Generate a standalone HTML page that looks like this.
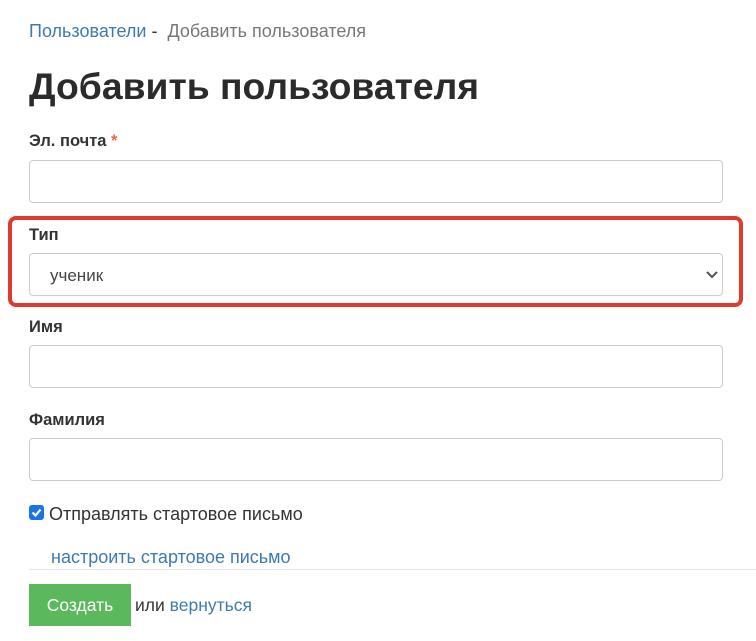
<!DOCTYPE html>
<html><head><meta charset="utf-8"><style>
body{margin:0;background:#fff;font-family:"Liberation Sans","DejaVu Sans",sans-serif;color:#333;width:756px;height:641px;overflow:hidden;position:relative}
.a{position:absolute}
.crumb{left:29px;top:21px;font-size:18px;color:#777}
.crumb span{color:#3c7ab0}
h1{position:absolute;left:29px;top:65px;margin:0;font-size:37.3px;font-weight:bold;color:#2b2b2b}
.lbl{position:absolute;left:29px;font-size:16.5px;font-weight:bold;color:#333}
.inp{position:absolute;left:29px;width:692px;height:41px;border:1px solid #ccc;border-radius:4px;background:#fff}
.red{position:absolute;left:8px;top:216px;width:727px;height:83px;border:4px solid #e03a2e;border-radius:8px}
</style></head><body>
<div class="a crumb"><span>Пользователи</span> <span style="color:#333">-</span>&nbsp; Добавить пользователя</div>
<h1>Добавить пользователя</h1>
<div class="lbl" style="top:132px">Эл. почта <span style="color:#f0604a">*</span></div>
<div class="inp" style="top:160px"></div>
<div class="red"></div>
<div class="lbl" style="top:226px">Тип</div>
<div class="inp" style="top:253px"><span class="a" style="left:20px;top:12px;font-size:17px;color:#444">ученик</span>
<svg class="a" style="left:676px;top:17px" width="12" height="8" viewBox="0 0 12 8"><path d="M1 1l5 5 5-5" fill="none" stroke="#555" stroke-width="2"/></svg></div>
<div class="lbl" style="top:318px">Имя</div>
<div class="inp" style="top:345px"></div>
<div class="lbl" style="top:411px">Фамилия</div>
<div class="inp" style="top:438px"></div>
<div class="a" style="left:29px;top:505px;width:15px;height:15px;background:#1a73e8;border-radius:3px"><svg width="15" height="15" viewBox="0 0 15 15"><path d="M3.5 7.5l3 3 5-6" fill="none" stroke="#fff" stroke-width="2.2"/></svg></div>
<div class="a" style="left:49px;top:504px;font-size:18px;color:#333">Отправлять стартовое письмо</div>
<div class="a" style="left:51px;top:547px;font-size:18px;color:#3c7ab0">настроить стартовое письмо</div>
<div class="a" style="left:29px;top:569px;width:727px;height:1px;background:#e8e8e8"></div>
<div class="a" style="left:29px;top:584px;width:102px;height:42px;background:#5cb85c;color:#fff;font-size:17.5px;line-height:42px;text-align:center">Создать</div>
<div class="a" style="left:135px;top:595px;font-size:17.5px;color:#333">или <span style="color:#3c7ab0">вернуться</span></div>
</body></html>
